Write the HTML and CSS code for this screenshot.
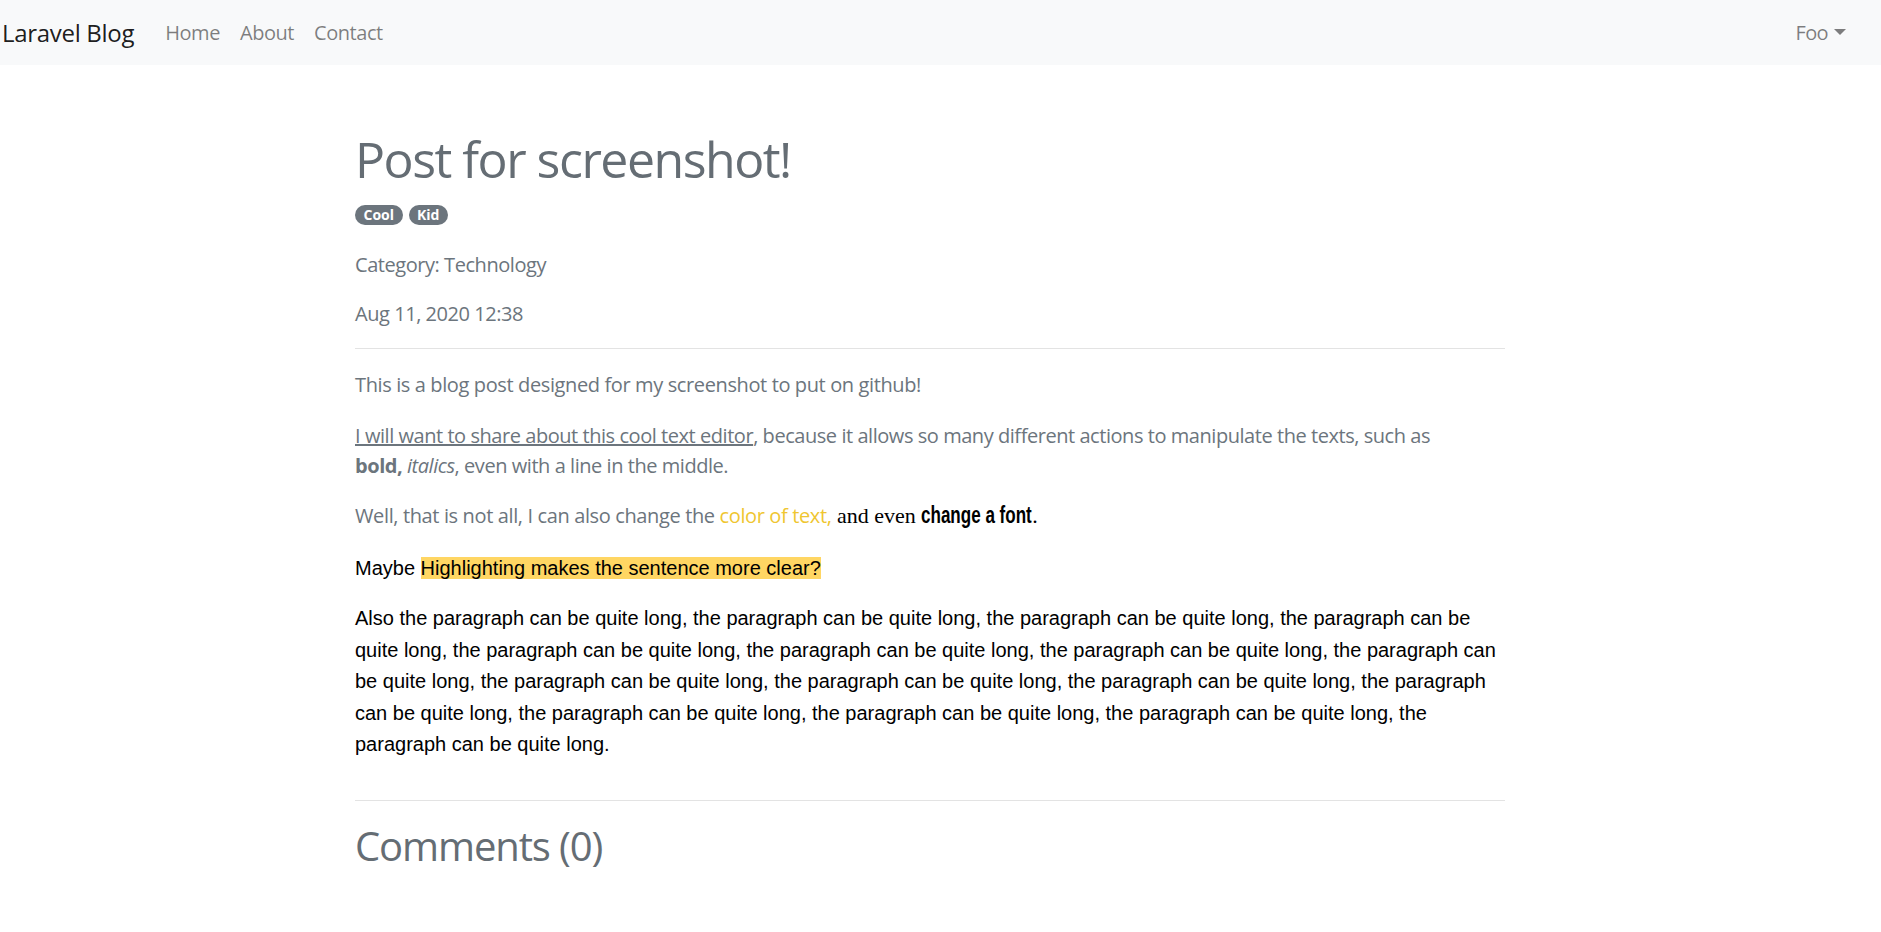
FILE: index.html
```html
<!DOCTYPE html>
<html lang="en">
<head>
<meta charset="utf-8">
<title>Laravel Blog</title>
<link rel="stylesheet" href="styles.css">
</head>
<body>
<nav class="navbar">
  <a class="brand" href="#">Laravel Blog</a>
  <ul class="nav-links">
    <li><a href="#">Home</a></li>
    <li><a href="#">About</a></li>
    <li><a href="#">Contact</a></li>
  </ul>
  <div class="nav-right">
    <a class="dropdown-toggle" href="#">Foo</a>
  </div>
</nav>
<main class="page">
  <article class="container">
    <h1 class="title">Post for screenshot!</h1>
    <div class="tags">
      <span class="badge">Cool</span>
      <span class="badge">Kid</span>
    </div>
    <p class="meta">Category: Technology</p>
    <p class="meta">Aug 11, 2020 12:38</p>
    <hr class="rule">
    <div class="post-body">
      <p class="p-intro">This is a blog post designed for my screenshot to put on github!</p>
      <p><u>I will want to share about this cool text editor</u>, because it allows so many different actions to manipulate the texts, such as<br><b>bold,</b> <i>italics</i>, even with a line in the middle.</p>
      <p class="p-fonts">Well, that is not all, I can also change the <span class="c-yellow">color of text,</span><span class="f-times"> and even </span><span class="f-impact"><span class="f-impact-inner">change a font</span></span><span class="f-times">.</span></p>
      <p class="arial p-maybe">Maybe <span class="hl">Highlighting makes the sentence more clear?</span></p>
      <p class="arial">Also the paragraph can be quite long, the paragraph can be quite long, the paragraph can be quite long, the paragraph can be quite long, the paragraph can be quite long, the paragraph can be quite long, the paragraph can be quite long, the paragraph can be quite long, the paragraph can be quite long, the paragraph can be quite long, the paragraph can be quite long, the paragraph can be quite long, the paragraph can be quite long, the paragraph can be quite long, the paragraph can be quite long, the paragraph can be quite long.</p>
    </div>
    <hr class="rule rule-comments">
    <h2 class="comments-title">Comments (0)</h2>
  </article>
</main>
</body>
</html>
```
FILE: styles.css
```css
* { box-sizing: border-box; }

html, body {
  margin: 0;
  padding: 0;
  background: #fff;
}

body {
  font-family: "Open Sans", "Noto Sans", sans-serif;
  font-size: 20px;
  line-height: 1.5;
  color: #212529;
}

a { text-decoration: none; }

/* ---------- navbar ---------- */
.navbar {
  height: 65px;
  background: #f8f9fa;
  display: flex;
  align-items: center;
  padding: 0 25px 0 2px;
}

.brand {
  font-size: 24px;
  line-height: 1.5;
  letter-spacing: -0.3px;
  color: rgba(0, 0, 0, 0.9);
  margin-right: 20px;
  white-space: nowrap;
}

.nav-links {
  list-style: none;
  margin: 0;
  padding: 0;
  display: flex;
}

.nav-links a,
.dropdown-toggle {
  display: block;
  padding: 0 10px;
  color: rgba(0, 0, 0, 0.5);
  font-size: 20px;
  line-height: 30px;
  letter-spacing: -0.45px;
}

.nav-links li:first-child a {
  padding-left: 11px;
}

.nav-right {
  margin-left: auto;
}

.dropdown-toggle {
  letter-spacing: -0.6px;
}

.dropdown-toggle::after {
  content: "";
  display: inline-block;
  margin-left: 6px;
  vertical-align: 5px;
  border-top: 6px solid rgba(0, 0, 0, 0.5);
  border-left: 6px solid transparent;
  border-right: 6px solid transparent;
}

/* ---------- page ---------- */
.page {
  padding: 64px 21px 40px 0;
}

.container {
  max-width: 1150px;
  margin: 0 auto;
  color: #6c757d;
  letter-spacing: -0.45px;
}

.title {
  margin: 0;
  font-size: 50px;
  font-weight: 400;
  line-height: 60px;
  letter-spacing: -1.5px;
  color: #656d74;
}

.tags {
  display: flex;
  gap: 6px;
  margin-top: 16px;
  margin-bottom: 25px;
}

.badge {
  display: inline-block;
  background: #6c757d;
  color: #fff;
  font-size: 14px;
  font-weight: 700;
  line-height: 20px;
  letter-spacing: 0;
  padding: 0 8.5px;
  border-radius: 10em;
}

.meta {
  margin: 0 0 19px;
}

.rule {
  border: 0;
  border-top: 1px solid #e3e3e3;
  margin: 0 0 21px;
}

.rule-comments {
  margin-top: 39px;
}

.post-body p {
  margin: 0 0 20px;
}

.post-body .p-intro {
  margin-bottom: 21px;
  letter-spacing: -0.38px;
}
.post-body .p-fonts {
  margin-bottom: 21.5px;
  letter-spacing: -0.37px;
}
.post-body .p-maybe { margin-bottom: 19px; }

.post-body b { font-weight: 700; }

.c-yellow { color: #efc631; }

.f-times {
  font-family: "Liberation Serif", "Times New Roman", serif;
  font-size: 22px;
  line-height: 1;
  letter-spacing: 0;
  color: #000;
}

.f-impact {
  display: inline-block;
  width: 111px;
  line-height: 1;
  color: #000;
  letter-spacing: 0;
  white-space: nowrap;
}

.f-impact-inner {
  display: inline-block;
  font-family: "Liberation Sans", Arial, sans-serif;
  font-size: 24px;
  font-weight: 700;
  transform: scaleX(0.71);
  transform-origin: left center;
}

.post-body .arial {
  font-family: "Liberation Sans", Arial, sans-serif;
  letter-spacing: 0;
  color: #000;
  line-height: 31.5px;
}

.hl { background: #ffd663; }

.comments-title {
  margin: 0;
  font-size: 40px;
  font-weight: 400;
  line-height: 48px;
  letter-spacing: -1.1px;
  color: #656d74;
}
```
